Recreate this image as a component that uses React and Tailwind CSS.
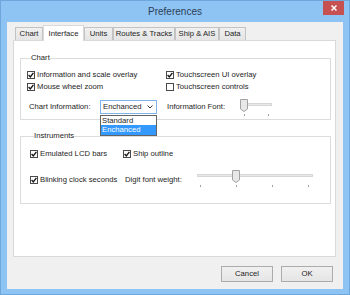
import React from "react";

const TABS = [
  { label: "Chart", w: "w-[28px]" },
  { label: "Interface", w: "w-[41px]", active: true },
  { label: "Units", w: "w-[29px]" },
  { label: "Routes & Tracks", w: "w-[62px]" },
  { label: "Ship & AIS", w: "w-[44px]" },
  { label: "Data", w: "w-[27px]" },
];

function Check({ checked, label }) {
  return (
    <div className="flex items-center gap-[2px]">
      <span className="flex h-[8px] w-[8px] items-center justify-center border border-[#4a4a4a] bg-white">
        {checked && (
          <svg width="6" height="6" viewBox="0 0 6 6">
            <path d="M0.6 3.1 L2.3 4.9 L5.4 0.9" fill="none" stroke="#1a1a1a" strokeWidth="1.4" />
          </svg>
        )}
      </span>
      <span className="whitespace-nowrap">{label}</span>
    </div>
  );
}

function Slider({ width, thumb, ticks }) {
  return (
    <svg width={width} height="20" viewBox={`0 0 ${width} 20`}>
      <rect x="1.5" y="4.5" width={width - 3} height="2" fill="#e7eaea" stroke="#d6d6d6" />
      {ticks.map((t) => (
        <line key={t} x1={t + 0.5} y1="15" x2={t + 0.5} y2="17" stroke="#a0a0a0" />
      ))}
      <path
        d={`M${thumb + 0.5} 0.5 H${thumb + 7.5} V10 L${thumb + 4} 12.5 L${thumb + 0.5} 10 Z`}
        fill="#e8e8e8"
        stroke="#a3a3a3"
      />
    </svg>
  );
}

export default function App() {
  return (
    <div className="flex h-[295px] w-[350px] flex-col border border-[#6ea7dc] bg-[#8ec4f4] font-['Liberation_Sans',Arial,sans-serif] text-[7.7px] text-[#1e1e1e]">
      <div className="relative flex h-[21px] items-center justify-center">
        <span className="text-[10px] text-[#2d3e55]">Preferences</span>
        <div className="absolute right-[5px] top-0 flex h-[14px] w-[21px] items-center justify-center bg-[#c75050]">
          <svg width="6" height="6" viewBox="0 0 6 6">
            <path d="M0.5 0.5 L5.5 5.5 M5.5 0.5 L0.5 5.5" stroke="#fff" strokeWidth="1.5" />
          </svg>
        </div>
      </div>

      <div className="mx-[6px] mb-[5px] flex flex-1 flex-col bg-[#f0f0f0] pl-[6px] pr-[7px] pt-[3px]">
        <div className="flex h-[15px] items-end pl-[2px]">
          {TABS.map((t) =>
            t.active ? (
              <div
                key={t.label}
                className={`${t.w} relative z-10 -mb-[1px] flex h-[16px] items-center justify-center border border-b-0 border-[#d9d9d9] bg-white`}
              >
                {t.label}
              </div>
            ) : (
              <div
                key={t.label}
                className={`${t.w} flex h-[13px] items-center justify-center border border-b-0 border-[#c3c3c3] bg-gradient-to-b from-[#f0f0f0] to-[#e5e5e5]`}
              >
                {t.label}
              </div>
            )
          )}
        </div>

        <div className="h-[217px] border border-[#d9d9d9] bg-white pl-[6px] pr-[4px] pt-[12px]">
          <fieldset className="border border-[#dcdcdc] pb-[5px] pl-[6px]">
            <legend className="ml-[4px] leading-[10px]">Chart</legend>
            <div className="mt-[6px] flex h-[11px] items-center">
              <div className="w-[139px]">
                <Check checked label="Information and scale overlay" />
              </div>
              <Check checked label="Touchscreen UI overlay" />
            </div>
            <div className="mt-[1px] flex h-[11px] items-center">
              <div className="w-[139px]">
                <Check checked label="Mouse wheel zoom" />
              </div>
              <Check label="Touchscreen controls" />
            </div>
            <div className="ml-[2px] mt-[8px] flex h-[14px] items-center">
              <span className="w-[71px]">Chart Information:</span>
              <div className="relative h-[14px] w-[57px]">
                <div className="flex h-full items-center justify-between border border-[#7eb4ea] bg-white pl-[2px] pr-[3px]">
                  <span>Enchanced</span>
                  <svg width="6" height="4" viewBox="0 0 6 4">
                    <path d="M0.5 0.5 L3 3 L5.5 0.5" fill="none" stroke="#333" strokeWidth="1" />
                  </svg>
                </div>
                <div className="absolute left-0 top-[15px] z-20 w-[57px] border border-[#646464] bg-white">
                  <div className="flex h-[9px] items-center pl-[1px]">Standard</div>
                  <div className="flex h-[10px] items-center bg-[#3399ff] pl-[1px] text-white">Enchanced</div>
                </div>
              </div>
              <span className="ml-[10px] w-[72px]">Information Font:</span>
              <div className="mt-[3px]">
                <Slider width={34} thumb={1} ticks={[5, 29]} />
              </div>
            </div>
          </fieldset>

          <fieldset className="mt-[11px] border border-[#dcdcdc] pb-[13px] pl-[9px]">
            <legend className="ml-[4px] leading-[10px]">Instruments</legend>
            <div className="mt-[7px] flex h-[11px] items-center">
              <div className="w-[93px]">
                <Check checked label="Emulated LCD bars" />
              </div>
              <Check checked label="Ship outline" />
            </div>
            <div className="mt-[11px] flex h-[20px] items-center">
              <div className="w-[95px]">
                <Check checked label="Blinking clock seconds" />
              </div>
              <span className="w-[71px]">Digit font weight:</span>
              <Slider width={118} thumb={36} ticks={[4, 40, 76, 112]} />
            </div>
          </fieldset>
        </div>

        <div className="mt-[9px] flex justify-end gap-[8px] pr-[3px]">
          <button className="h-[16px] w-[52px] border border-[#acacac] bg-gradient-to-b from-[#f0f0f0] to-[#e5e5e5]">
            Cancel
          </button>
          <button className="h-[16px] w-[52px] border border-[#acacac] bg-gradient-to-b from-[#f0f0f0] to-[#e5e5e5]">
            OK
          </button>
        </div>
      </div>
    </div>
  );
}
